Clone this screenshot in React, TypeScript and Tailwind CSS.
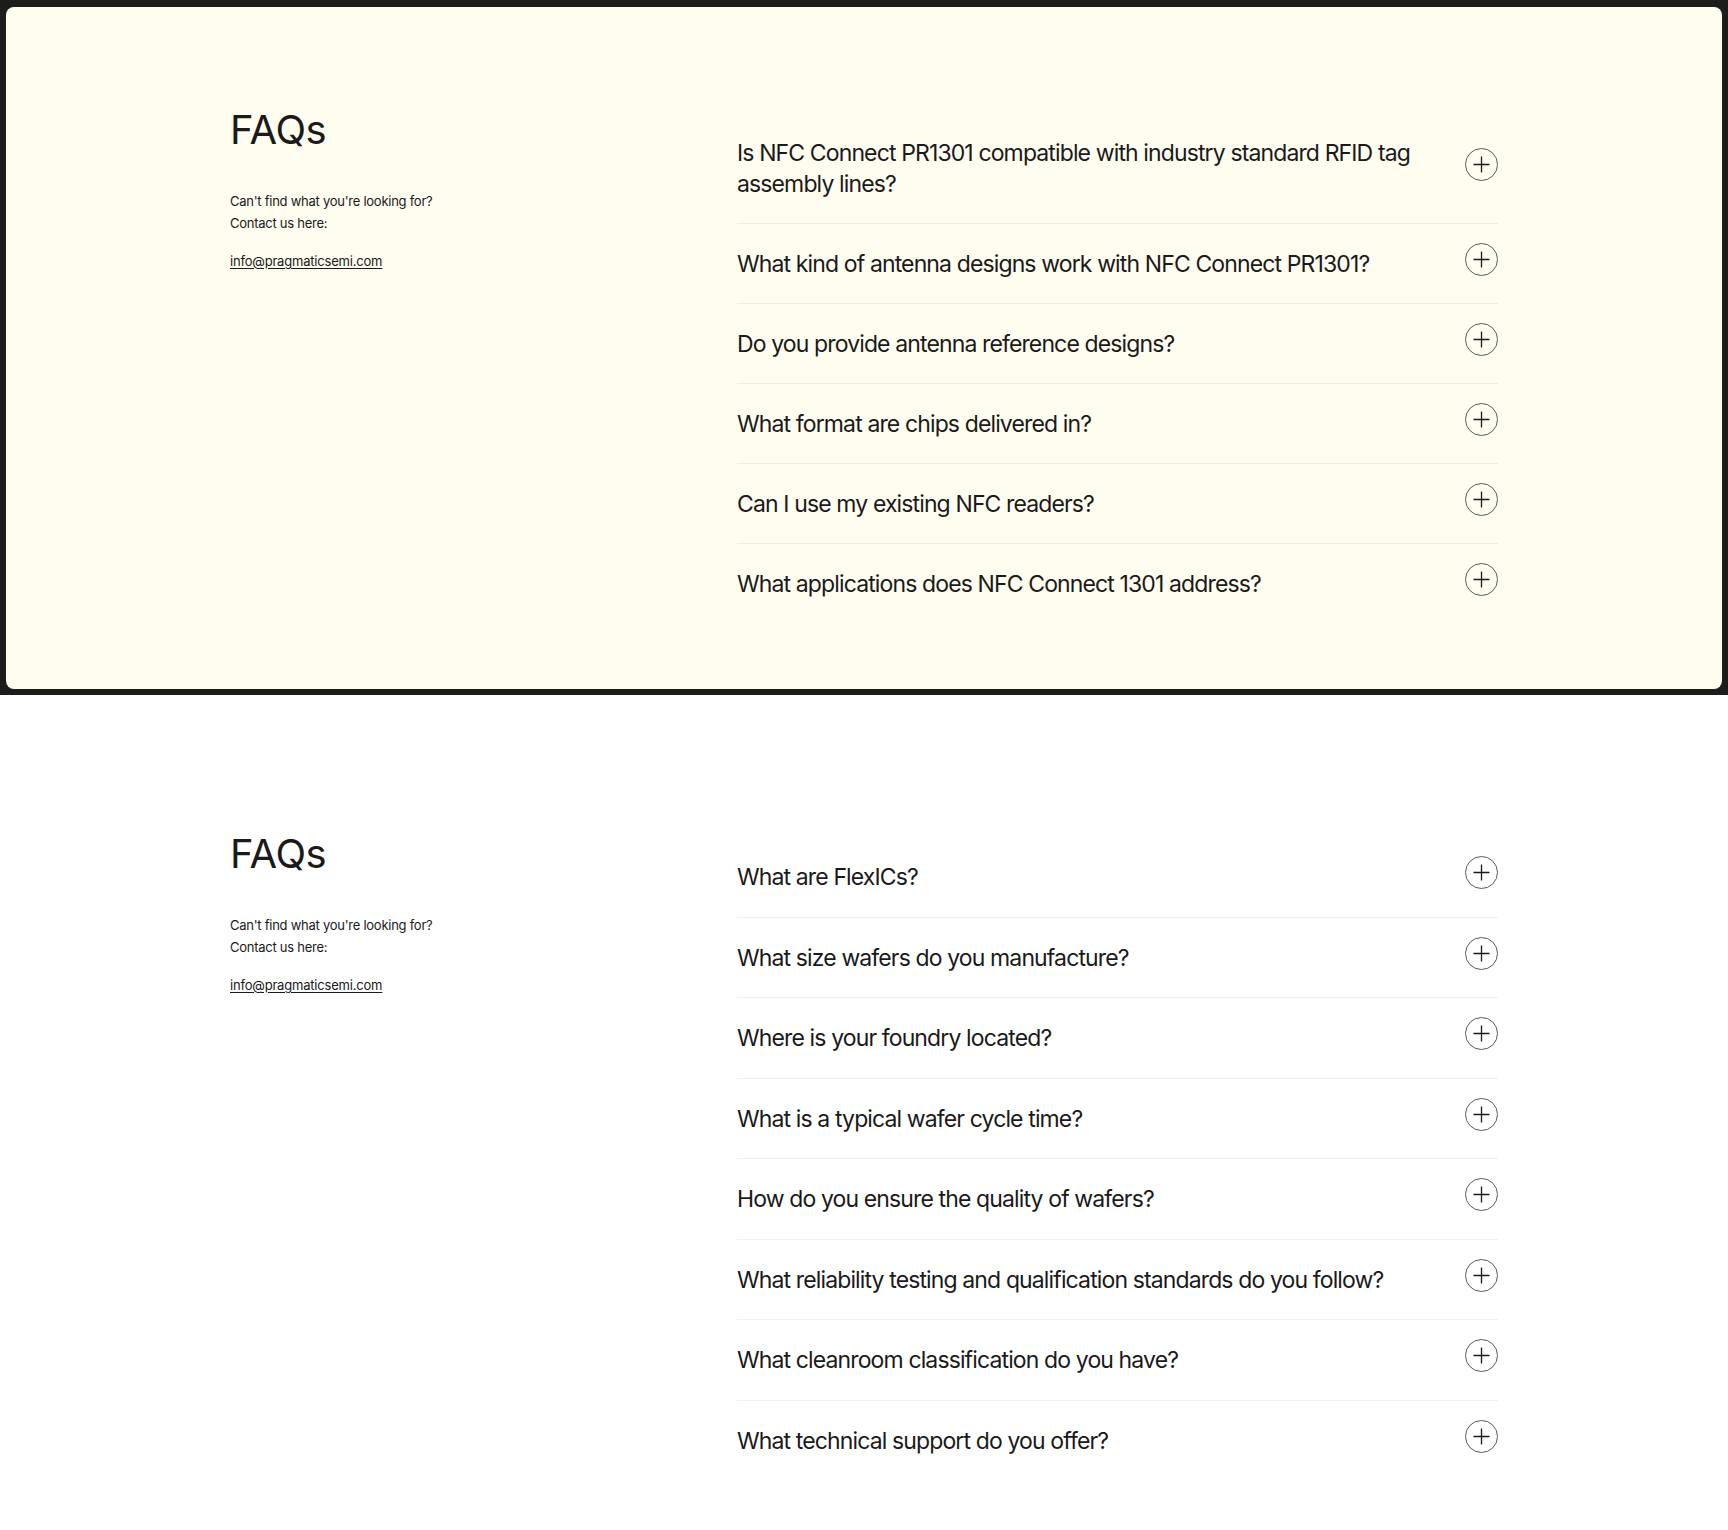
const nfcQuestions = [
  'Is NFC Connect PR1301 compatible with industry standard RFID tag assembly lines?',
  'What kind of antenna designs work with NFC Connect PR1301?',
  'Do you provide antenna reference designs?',
  'What format are chips delivered in?',
  'Can I use my existing NFC readers?',
  'What applications does NFC Connect 1301 address?',
]

const foundryQuestions = [
  'What are FlexICs?',
  'What size wafers do you manufacture?',
  'Where is your foundry located?',
  'What is a typical wafer cycle time?',
  'How do you ensure the quality of wafers?',
  'What reliability testing and qualification standards do you follow?',
  'What cleanroom classification do you have?',
  'What technical support do you offer?',
]

function PlusIcon() {
  return (
    <svg width="33" height="33" viewBox="0 0 33 33" fill="none" className="-my-2 shrink-0 -translate-y-[5px]">
      <circle cx="16.5" cy="16.5" r="16" stroke="#5a5a58" strokeWidth="1" />
      <path d="M16.5 8.5v16M8.5 16.5h16" stroke="#1a1a1a" strokeWidth="1.3" />
    </svg>
  )
}

function FaqBlock({ questions, divider, row }: { questions: string[]; divider: string; row: string }) {
  return (
    <div className="mx-auto grid w-[1268px] grid-cols-[507px_1fr]">
      <div>
        <h2 className="-mt-[5px] text-[40px] leading-[44px] tracking-[-0.01em] text-[#1a1a1a]">FAQs</h2>
        <p className="mt-[38px] text-[13px] leading-[22px] tracking-[-0.02em] text-[#1a1a1a]">
          Can&apos;t find what you&apos;re looking for?
          <br />
          Contact us here:
        </p>
        <a href="#" className="mt-4 block text-[13px] leading-[22px] tracking-[-0.015em] text-[#1a1a1a] underline underline-offset-2">
          info@pragmaticsemi.com
        </a>
      </div>

      <div className={`divide-y ${divider}`}>
        {questions.map((q) => (
          <button key={q} className={`flex w-full items-center justify-between gap-8 text-left ${row}`}>
            <span className="text-[23px] leading-[31px] tracking-[-0.038em] text-[#1a1a1a]">{q}</span>
            <PlusIcon />
          </button>
        ))}
      </div>
    </div>
  )
}

export default function App() {
  return (
    <div className="min-h-[1530px] bg-white" style={{ fontFamily: 'Inter, "Noto Sans", sans-serif' }}>
      <section className="bg-[#1c1c1b] pt-[7px] pr-[6px] pb-[6px] pl-[6px]">
        <div className="rounded-[8px] bg-[#fffcf0] pt-[106px] pb-[66px]">
          <FaqBlock questions={nfcQuestions} divider="divide-[#efebde]" row="pt-[25px] pb-[23px]" />
        </div>
      </section>

      <section className="pt-[142px] pb-[46px]">
        <FaqBlock questions={foundryQuestions} divider="divide-[#efefef]" row="pt-[25px] pb-[23.5px]" />
      </section>
    </div>
  )
}
